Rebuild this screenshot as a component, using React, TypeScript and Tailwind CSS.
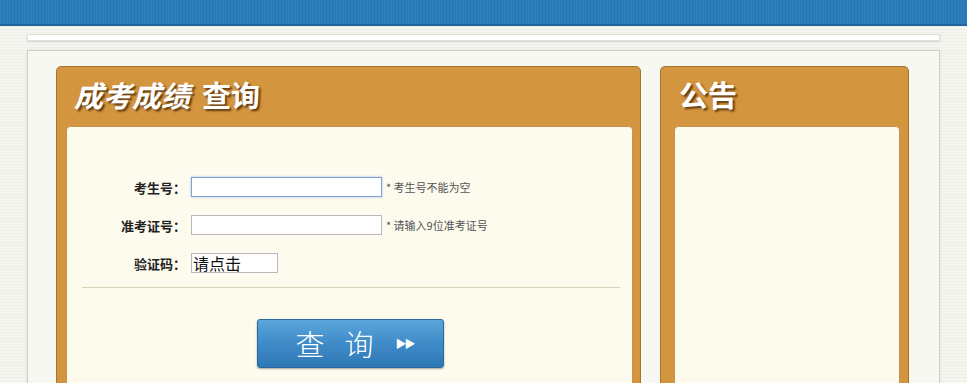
import React from 'react';

const cjk = "font-['Noto_Sans_CJK_SC','Noto_Sans',sans-serif]";

const stripes =
  'bg-[repeating-linear-gradient(180deg,#f6f6f1_0px,#f6f6f1_2px,#eeeee8_2px,#eeeee8_3px)]';

function FormRow({ label, children }: { label: string; children: React.ReactNode }) {
  return (
    <div className="flex items-center h-[20px]">
      <span className="w-[119px] text-right text-[13px] font-bold text-[#222] leading-none">
        {label}
      </span>
      <div className="ml-[5px] flex items-center">{children}</div>
    </div>
  );
}

export default function App() {
  return (
    <div className={`w-[967px] h-[383px] overflow-hidden ${stripes} ${cjk}`}>
      {/* top blue bar */}
      <div className="h-[26px] bg-[#2c7cba] border-b-2 border-[#1f669f] bg-[repeating-linear-gradient(90deg,#2d7dbb_0px,#2d7dbb_2px,#2877b5_2px,#2877b5_3px)]" />

      <div className="mx-[27px] mt-[8px] h-[7px] bg-white border border-[#dededa] shadow-[0_1px_2px_rgba(0,0,0,0.12)]" />

      <div className="mx-[27px] mt-[9px] h-[400px] border border-[#cfcfca] bg-[#f8f8f3] shadow-[0_0_3px_rgba(0,0,0,0.08)] pl-[28px] pr-[30px] pt-[15px] flex gap-[19px]">
        {/* left panel */}
        <div className="w-[585px] rounded-[5px] border border-[#a8742d] bg-[#d4953f] pl-[9px] pr-[7px] flex flex-col">
          <div className="h-[59px] flex items-center pl-[8px] pb-[4px] text-white text-[29px] font-bold [text-shadow:2px_2px_2px_rgba(60,30,0,0.75)]">
            <span className="italic">成考成绩</span>
            <span className="ml-[12px]">查询</span>
          </div>
          <div className="flex-1 rounded-t-[4px] border border-[#c5934e] bg-[#fdfaee] pt-[50px]">
            <div className="flex flex-col gap-[18px]">
              <FormRow label="考生号：">
                <input className="w-[191px] h-[20px] border border-[#7da2d8] bg-white outline-none shadow-[0_0_2px_rgba(80,130,210,0.5)]" />
                <span className="ml-[4px] text-[11px] text-[#555]">* 考生号不能为空</span>
              </FormRow>
              <FormRow label="准考证号：">
                <input className="w-[191px] h-[20px] border border-[#b8b8b8] bg-white outline-none" />
                <span className="ml-[4px] text-[11px] text-[#555]">* 请输入9位准考证号</span>
              </FormRow>
              <FormRow label="验证码：">
                <div className="w-[87px] h-[20px] border border-[#b8b8b8] bg-white text-[16px] leading-[18px] text-[#111] pl-[1px]">
                  请点击
                </div>
              </FormRow>
            </div>
            <div className="mt-[14px] ml-[15px] mr-[12px] border-t border-[#d8d2b6]" />
            <div className="mt-[31px] ml-[190px]">
              <button className="w-[187px] h-[49px] pl-[8px] rounded-[3px] border border-[#2a679c] bg-[linear-gradient(180deg,#5ba6db_0%,#3f8bc8_50%,#2f78b6_100%)] shadow-[0_1px_2px_rgba(0,0,0,0.35)] text-white flex items-center justify-center">
                <span className="text-[29px] font-light tracking-[20px] leading-none">查询</span>
                <span className="ml-[2px] text-[11px] leading-none tracking-[-2px]">▶▶</span>
              </button>
            </div>
          </div>
        </div>

        {/* right panel */}
        <div className="w-[249px] rounded-[5px] border border-[#a8742d] bg-[#d4953f] pl-[13px] pr-[8px] flex flex-col">
          <div className="h-[59px] flex items-center pl-[5px] pb-[4px] text-white text-[29px] font-bold [text-shadow:2px_2px_2px_rgba(60,30,0,0.75)]">
            公告
          </div>
          <div className="flex-1 rounded-t-[4px] border border-[#c5934e] bg-[#fdfaee]" />
        </div>
      </div>
    </div>
  );
}
